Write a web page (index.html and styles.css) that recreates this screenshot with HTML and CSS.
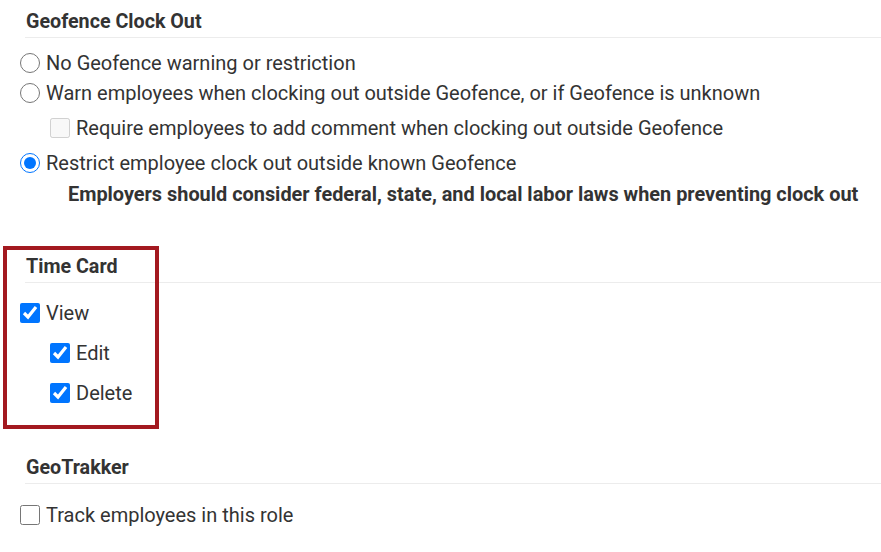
FILE: index.html
```html
<!DOCTYPE html>
<html lang="en">
<head>
<meta charset="utf-8">
<title>Role settings</title>
<link rel="stylesheet" href="styles.css">
</head>
<body>
<div class="page">
  <section class="section s-geofence">
    <h3 class="sec-title">Geofence Clock Out</h3>
    <div class="opts first">
      <label class="opt"><input type="radio" name="geo" class="ctl"><span>No Geofence warning or restriction</span></label>
      <label class="opt"><input type="radio" name="geo" class="ctl"><span>Warn employees when clocking out outside Geofence, or if Geofence is unknown</span></label>
      <label class="opt sub gap5 disabled"><input type="checkbox" class="ctl" disabled><span>Require employees to add comment when clocking out outside Geofence</span></label>
      <label class="opt gap5"><input type="radio" name="geo" class="ctl" checked><span>Restrict employee clock out outside known Geofence</span></label>
      <p class="warn">Employers should consider federal, state, and local labor laws when preventing clock out</p>
    </div>
  </section>

  <section class="section s-timecard">
    <h3 class="sec-title">Time Card</h3>
    <div class="opts tc">
      <label class="opt"><input type="checkbox" class="ctl" checked><span>View</span></label>
      <label class="opt sub gap10"><input type="checkbox" class="ctl" checked><span>Edit</span></label>
      <label class="opt sub gap10"><input type="checkbox" class="ctl" checked><span>Delete</span></label>
    </div>
  </section>

  <section class="section s-geotrakker">
    <h3 class="sec-title">GeoTrakker</h3>
    <div class="opts gt">
      <label class="opt"><input type="checkbox" class="ctl"><span>Track employees in this role</span></label>
    </div>
  </section>

  <div class="highlight"></div>
</div>
</body>
</html>
```

FILE: styles.css
```css
html, body {
  margin: 0;
  padding: 0;
  background: #fff;
}
body {
  font-family: Roboto, "Liberation Sans", Arial, sans-serif;
  color: #333;
  font-size: 20px;
}
.page {
  position: relative;
  width: 881px;
  height: 552px;
  overflow: hidden;
}
.section {
  display: flex;
  flex-direction: column;
}
.sec-title {
  margin: 0 0 0 25px;
  padding: 10px 0 3px 1px;
  font-size: 19.7px;
  line-height: 24px;
  font-weight: 700;
  color: #333;
  border-bottom: 1px solid #ececec;
}
.opts {
  display: flex;
  flex-direction: column;
  padding-left: 20px;
}
.opts.first { margin-top: 10px; }
.opts.tc { margin-top: 15px; }
.opts.gt { margin-top: 16px; }
.opt {
  display: flex;
  align-items: center;
  gap: 6px;
  height: 30px;
  line-height: 30px;
  white-space: nowrap;
}
.opt.sub { padding-left: 30px; }
.opt.gap5 { margin-top: 5px; }
.opt.gap10 { margin-top: 10px; }
.ctl {
  width: 20px;
  height: 20px;
  margin: 0;
  flex: none;
  accent-color: #0075ff;
}
.warn {
  margin: 2px 0 0 48px;
  height: 30px;
  line-height: 30px;
  font-size: 19.9px;
  font-weight: 700;
  color: #333;
  white-space: nowrap;
}
.s-timecard { margin-top: 35px; }
.s-geotrakker { margin-top: 38px; }
.highlight {
  position: absolute;
  left: 3px;
  top: 246px;
  width: 148px;
  height: 175px;
  border: 4px solid #a31920;
}
```
